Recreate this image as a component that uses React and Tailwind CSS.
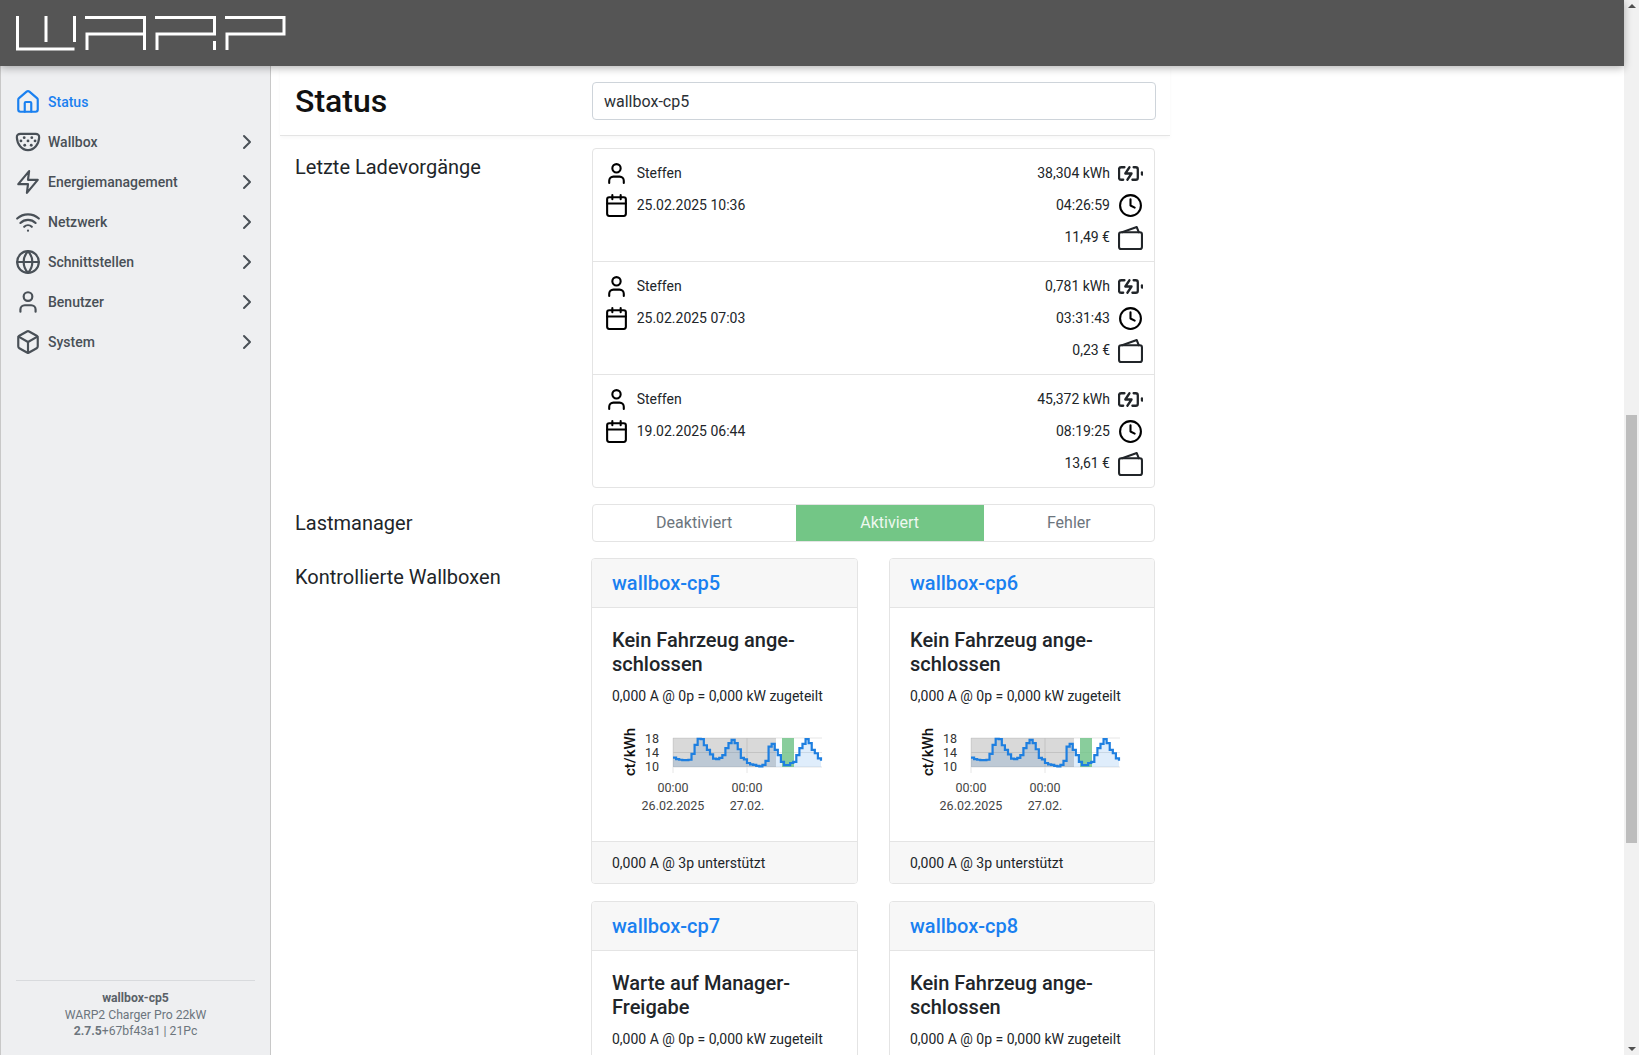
import { House, User, Calendar, Clock, Wifi, Globe, Box, ChevronRight } from 'lucide-react';

const PlugIcon = ({ className }) => (
  <svg viewBox="0 0 24 24" width="26" height="26" fill="none" stroke="currentColor" strokeWidth="2" className={className}>
    <path d="M5 4.500h14c2 0 3.500 1.200 3.300 3.400C22 14 18 19.500 12 19.500S2 14 1.700 7.900C1.500 5.700 3 4.500 5 4.500z" />
    <g fill="currentColor" stroke="none">
      <circle cx="8.500" cy="8" r="1.300" />
      <circle cx="15.500" cy="8" r="1.300" />
      <circle cx="5.500" cy="11" r="1.300" />
      <circle cx="12" cy="11" r="1.300" />
      <circle cx="18.500" cy="11" r="1.300" />
      <circle cx="9" cy="15" r="1.300" />
      <circle cx="15" cy="15" r="1.300" />
    </g>
  </svg>
);

const ZapIcon = ({ className }) => (
  <svg viewBox="0 0 24 24" width="26" height="26" fill="none" stroke="currentColor" strokeWidth="2" strokeLinejoin="round" strokeLinecap="round" className={className}>
    <polygon points="13 2 3 14 12 14 11 22 21 10 12 10 13 2" />
  </svg>
);

const BatteryIcon = () => (
  <svg viewBox="0 0 24 24" width="25" height="25" fill="none" stroke="currentColor" strokeWidth="2.200" strokeLinejoin="round" strokeLinecap="round">
    <path d="M5 18H3a2 2 0 0 1-2-2V8a2 2 0 0 1 2-2h3.190M15 6h2a2 2 0 0 1 2 2v8a2 2 0 0 1-2 2h-3.190" />
    <line x1="23" y1="13" x2="23" y2="11" />
    <polyline points="11 6 7 12 13 12 9 18" />
  </svg>
);

const WalletIcon = () => (
  <svg viewBox="0 0 24 24" width="25" height="25" fill="none" stroke="currentColor" strokeWidth="2" strokeLinejoin="round" strokeLinecap="round">
    <rect x="1" y="7" width="22" height="16" rx="2" />
    <path d="M4 7l14-5 2 5" />
  </svg>
);

const Logo = () => (
  <svg width="290" height="66" viewBox="0 0 290 66" fill="none" stroke="#fff" strokeWidth="3">
    <path d="M17.500 16v33h57" />
    <path d="M46 16v26M74.500 16v26" />
    <path d="M85 17.500h59.500V50M87 50V34h57" />
    <path d="M155 17.500h59.500V34H157v16M214.500 41v9" />
    <path d="M225 17.500h59V34h-57v16" />
  </svg>
);

const navItems = [
  { label: 'Wallbox', icon: PlugIcon },
  { label: 'Energiemanagement', icon: ZapIcon },
  { label: 'Netzwerk', icon: Wifi },
  { label: 'Schnittstellen', icon: Globe },
  { label: 'Benutzer', icon: User },
  { label: 'System', icon: Box },
];

const charges = [
  { user: 'Steffen', date: '25.02.2025 10:36', energy: '38,304 kWh', time: '04:26:59', cost: '11,49 €' },
  { user: 'Steffen', date: '25.02.2025 07:03', energy: '0,781 kWh', time: '03:31:43', cost: '0,23 €' },
  { user: 'Steffen', date: '19.02.2025 06:44', energy: '45,372 kWh', time: '08:19:25', cost: '13,61 €' },
];

const prices = [
  12.6, 12.2, 12, 11.9, 11.9, 12, 13.6, 16.1, 17.8, 17.7, 16, 14.7, 13.5, 12.3, 12.2, 12.5, 13.3, 15.2, 16.6, 17.5, 16.6, 14.9, 12.5, 12.1,
  11.1, 10.7, 10.6, 10.3, 10.2, 10.6, 11.7, 15.6, 16.4, 14.7, 13.3, 11.4, 10.5, 10.5, 11.1, 11.4, 13.3, 15.2, 16.4, 17.7, 16.6, 14.7, 13.8, 12.4, 11.7,
];

// stepped line, svg origin sits at the card's left edge
const px = (h) => 82 + h * 3.083;
const py = (v) => 47 - (v - 10) * 3.625;
const stepLine = prices
  .map((v, i) => (i === 0 ? `M${px(0)} ${py(v)}` : `H${px(i)} V${py(v)}`))
  .join(' ');

const PriceChart = () => (
  <svg width="264" height="100" viewBox="0 0 264 100" className="block" fontFamily="Roboto, sans-serif">
    <g stroke="#e6e6e6" strokeWidth="1">
      <line x1="82" x2="231" y1="18" y2="18" />
      <line x1="82" x2="231" y1="32.500" y2="32.500" />
      <line x1="82" x2="231" y1="47" y2="47" />
      <line x1="82" x2="82" y1="18" y2="53" />
      <line x1="156" x2="156" y1="18" y2="53" />
    </g>
    <path d={`${stepLine} V47 H82 Z`} fill="#1e7fe0" fillOpacity="0.14" />
    <rect x="82" y="18" width="103" height="29" fill="#000" fillOpacity="0.15" />
    <rect x="191" y="18" width="12" height="29" fill="#6cc183" fillOpacity="0.8" />
    <path d={stepLine} fill="none" stroke="#1e7fe0" strokeWidth="2.200" />
    <g fontSize="12.500" fill="#333" textAnchor="end">
      <text x="68" y="22.500">18</text>
      <text x="68" y="37">14</text>
      <text x="68" y="51">10</text>
    </g>
    <text transform="translate(44 32) rotate(-90)" fontSize="15" fontWeight="500" fill="#111" textAnchor="middle">ct/kWh</text>
    <g fontSize="12.500" fill="#444" textAnchor="middle">
      <text x="82" y="72">00:00</text>
      <text x="156" y="72">00:00</text>
      <text x="82" y="90">26.02.2025</text>
      <text x="156" y="90">27.02.</text>
    </g>
  </svg>
);

const WallboxCard = ({ name, line1, line2 }) => (
  <div className="border border-[#e4e4e4] rounded overflow-hidden bg-white">
    <div className="h-[49px] bg-[#f7f7f7] border-b border-[#e4e4e4] px-5 flex items-center text-xl font-medium text-[#1a80f0]">
      {name}
    </div>
    <div className="px-5 pt-5 pb-0">
      <div className="text-xl font-medium text-[#212529] leading-6">
        {line1}
        <br />
        {line2}
      </div>
      <div className="mt-[10px] text-sm leading-[21px] text-[#212529]">0,000 A @ 0p = 0,000 kW zugeteilt</div>
    </div>
    <div className="mt-[13px] -mx-px">
      <PriceChart />
    </div>
    <div className="mt-[21px] h-[42px] bg-[#f7f7f7] border-t border-[#e4e4e4] px-5 flex items-center text-sm text-[#212529]">
      0,000 A @ 3p unterstützt
    </div>
  </div>
);

const App = () => {
  return (
    <div className="flex h-screen overflow-hidden bg-white font-[Roboto,sans-serif] text-[#212529]">
      <div className="flex-1 flex flex-col min-w-0">
        <header className="h-[66px] shrink-0 bg-[#555555] shadow-[0_2px_8px_rgba(0,0,0,0.3)] relative z-10">
          <Logo />
        </header>
        <div className="flex flex-1 min-h-0">
          <aside className="w-[271px] shrink-0 bg-[#eeeff1] border-l border-r border-[#c8c8c8] flex flex-col justify-between">
            <nav className="pt-4 pl-[14px] pr-[11px]">
              <div className="h-10 flex items-center gap-[7px] text-sm font-medium text-[#1a80f0]">
                <House size={26} strokeWidth={2} />
                <span>Status</span>
              </div>
              {navItems.map((item) => {
                const Icon = item.icon;
                return (
                  <div key={item.label} className="h-10 flex items-center gap-[7px] text-sm font-medium text-[#495057]">
                    <Icon size={26} strokeWidth={2} className="text-[#495057]" />
                    <span className="flex-1">{item.label}</span>
                    <ChevronRight size={24} strokeWidth={2} />
                  </div>
                );
              })}
            </nav>
            <div className="mx-[15px] mb-[15px] pt-[9px] border-t border-[#d8dadd] text-[12.200px] leading-[16.700px] text-center text-[#6c757d]">
              <div className="font-bold text-[#5a6168]">wallbox-cp5</div>
              <div>WARP2 Charger Pro 22kW</div>
              <div>
                <span className="font-bold">2.7.5</span>+67bf43a1 | 21Pc
              </div>
            </div>
          </aside>
          <main className="flex-1 min-w-0 overflow-hidden">
            <div className="ml-[9px] w-[890px]">
              <div className="flex items-start h-[70px] pt-4 px-[15px] border-b border-[#e4e4e4] shadow-[0_2px_4px_rgba(0,0,0,0.03)]">
                <h1 className="w-[297px] shrink-0 text-[32px] leading-[38px] font-medium text-[#111]">Status</h1>
                <div className="w-[564px] shrink-0 h-[38px] border border-[#ced4da] rounded flex items-center pl-[11px] pt-px text-base text-[#2b3035]">
                  wallbox-cp5
                </div>
              </div>
              <div className="px-[15px] pt-3">
                <div className="flex">
                  <div className="w-[297px] text-xl leading-[38px]">Letzte Ladevorgänge</div>
                  <div className="w-[564px] border border-[#e4e4e4] rounded">
                    {charges.map((c, i) => (
                      <div
                        key={c.date}
                        className={`px-[11px] pt-3 ${i > 0 ? 'h-[113px] border-t border-[#e4e4e4]' : 'h-[112px]'} flex justify-between text-sm`}
                      >
                        <div className="flex flex-col gap-2">
                          <div className="h-6 flex items-center gap-2">
                            <User size={25} strokeWidth={2} className="text-black" />
                            <span>{c.user}</span>
                          </div>
                          <div className="h-6 flex items-center gap-2">
                            <Calendar size={25} strokeWidth={2} className="text-black" />
                            <span>{c.date}</span>
                          </div>
                        </div>
                        <div className="flex flex-col gap-2 items-end">
                          <div className="h-6 flex items-center gap-2">
                            <span>{c.energy}</span>
                            <BatteryIcon />
                          </div>
                          <div className="h-6 flex items-center gap-2">
                            <span>{c.time}</span>
                            <Clock size={25} strokeWidth={2} className="text-black" />
                          </div>
                          <div className="h-6 flex items-center gap-2">
                            <span>{c.cost}</span>
                            <WalletIcon />
                          </div>
                        </div>
                      </div>
                    ))}
                  </div>
                </div>
                <div className="flex mt-4">
                  <div className="w-[297px] text-xl leading-[38px]">Lastmanager</div>
                  <div className="w-[564px] h-[38px] flex border border-[#e4e4e4] rounded text-base text-[#6c757d]">
                    <div className="w-[203px] flex items-center justify-center">Deaktiviert</div>
                    <div className="w-[188px] flex items-center justify-center bg-[#73c686] text-[#eef8f0]">Aktiviert</div>
                    <div className="flex-1 flex items-center justify-center">Fehler</div>
                  </div>
                </div>
                <div className="flex mt-4">
                  <div className="w-[297px] text-xl leading-[38px]">Kontrollierte Wallboxen</div>
                  <div className="w-[564px] grid grid-cols-[267px_266px] gap-x-[31px] gap-y-[17px]">
                    <WallboxCard name="wallbox-cp5" line1="Kein Fahrzeug ange-" line2="schlossen" />
                    <WallboxCard name="wallbox-cp6" line1="Kein Fahrzeug ange-" line2="schlossen" />
                    <WallboxCard name="wallbox-cp7" line1="Warte auf Manager-" line2="Freigabe" />
                    <WallboxCard name="wallbox-cp8" line1="Kein Fahrzeug ange-" line2="schlossen" />
                  </div>
                </div>
              </div>
            </div>
          </main>
        </div>
      </div>
      <div className="w-[15px] shrink-0 bg-[#f1f1f1] flex flex-col items-center justify-between py-[4px] relative">
        <div className="w-0 h-0 border-x-[4px] border-x-transparent border-b-[4px] border-b-[#505050]" />
        <div className="absolute top-[415px] left-[2px] w-[11px] h-[428px] bg-[#bdbdbd]" />
        <div className="w-0 h-0 border-x-[4px] border-x-transparent border-t-[4px] border-t-[#505050]" />
      </div>
    </div>
  );
};

export default App;
